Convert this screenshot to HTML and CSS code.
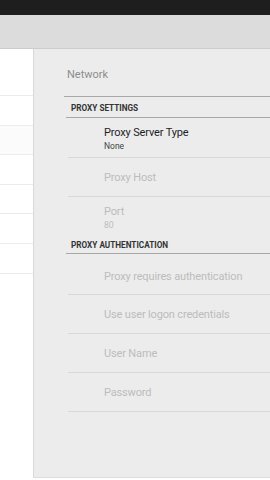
FILE: index.html
```html
<!DOCTYPE html>
<html>
<head>
<meta charset="utf-8">
<link rel="stylesheet" href="styles.css">
</head>
<body>
<div class="statusbar"></div>
<div class="actionbar"></div>
<div class="main">
  <div class="left">
    <div class="left-head"></div>
    <div class="left-row"></div>
    <div class="left-row sel"></div>
    <div class="left-row"></div>
    <div class="left-row"></div>
    <div class="left-row"></div>
    <div class="left-row"></div>
  </div>
  <div class="panel">
    <div class="title">Network</div>
    <div class="cat">PROXY SETTINGS</div>
    <div class="item two h40">
      <div class="it-title">Proxy Server Type</div>
      <div class="it-sum">None</div>
    </div>
    <div class="item dis">
      <div class="it-title">Proxy Host</div>
    </div>
    <div class="item two dis noline">
      <div class="it-title">Port</div>
      <div class="it-sum">80</div>
    </div>
    <div class="cat cat2">PROXY AUTHENTICATION</div>
    <div class="item dis h41">
      <div class="it-title">Proxy requires authentication</div>
    </div>
    <div class="item dis">
      <div class="it-title">Use user logon credentials</div>
    </div>
    <div class="item dis">
      <div class="it-title">User Name</div>
    </div>
    <div class="item dis">
      <div class="it-title">Password</div>
    </div>
  </div>
</div>
</body>
</html>
```
FILE: styles.css
```css
html, body {
  margin: 0;
  padding: 0;
  width: 270px;
  height: 480px;
  overflow: hidden;
  background: #ffffff;
  font-family: Roboto, "Noto Sans", sans-serif;
}
.statusbar {
  height: 15px;
  background: #1e1e1e;
}
.actionbar {
  height: 33px;
  background: #dcdcdc;
  border-bottom: 1px solid #cccccc;
}
.main {
  display: flex;
  height: 431px;
}
.left {
  width: 33px;
  flex: none;
  background: #ffffff;
}
.left-head {
  height: 46px;
  border-bottom: 1px solid #ececec;
}
.left-row {
  height: 28.6px;
  border-bottom: 1px solid #ececec;
}
.left-row.sel {
  background: #fbfbfb;
}
.panel {
  flex: 1;
  background: #ececec;
  border-left: 1px solid #d9d9d9;
  border-bottom: 1px solid #dddddd;
  margin-bottom: 2px;
  padding-left: 30px;
  display: flex;
  flex-direction: column;
}
.title {
  height: 48px;
  flex: none;
  display: flex;
  align-items: center;
  padding-left: 3px;
  padding-top: 4px;
  box-sizing: border-box;
  font-size: 11px;
  color: #8c8c8c;
  border-bottom: 1.5px solid #a8a8a8;
}
.cat {
  height: 21px;
  flex: none;
  display: flex;
  align-items: center;
  padding-left: 5px;
  padding-top: 2px;
  box-sizing: border-box;
  margin-left: 2px;
  font-size: 8.2px;
  font-weight: bold;
  color: #333333;
  border-bottom: 1px solid #a8a8a8;
}
.cat2 {
  height: 17px;
  padding-top: 0;
}
.item {
  height: 39px;
  flex: none;
  margin-left: 4px;
  padding-left: 36px;
  padding-top: 2px;
  box-sizing: border-box;
  display: flex;
  flex-direction: column;
  justify-content: center;
  border-bottom: 1px solid #d8d8d8;
}
.item.h40 {
  height: 40px;
  padding-top: 3px;
}
.item.h41 {
  height: 41px;
  padding-top: 5px;
}
.item.noline {
  border-bottom: none;
  height: 40px;
  padding-top: 1px;
}
.it-title {
  font-size: 11px;
  letter-spacing: -0.15px;
  color: #1e1e1e;
  line-height: 14px;
}
.it-sum {
  font-size: 8.5px;
  color: #444444;
  line-height: 12px;
}
.item.dis .it-title {
  color: #bcbcbc;
}
.item.dis .it-sum {
  color: #bcbcbc;
}
```
